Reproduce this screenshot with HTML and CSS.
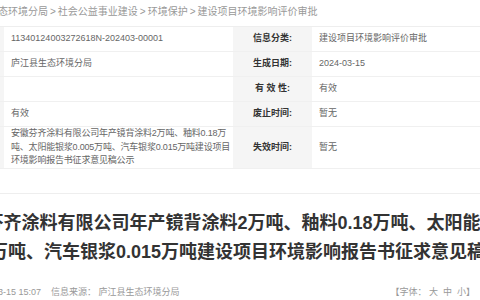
FILE: index.html
```html
<!doctype html>
<html>
<head>
<meta charset="utf-8">
<link rel="stylesheet" href="styles.css">
<title>建设项目环境影响评价审批</title>
</head>
<body>
<div class="page">
  <div class="crumb">
    <span>庐江县生态环境分局</span><span class="sep">&gt;</span><span>社会公益事业建设</span><span class="sep">&gt;</span><span>环境保护</span><span class="sep">&gt;</span><span>建设项目环境影响评价审批</span>
  </div>

  <div class="info-box">
    <table class="info">
      <tr>
        <th>索 引 号:</th>
        <td>11340124003272618N-202403-00001</td>
        <th>信息分类:</th>
        <td>建设项目环境影响评价审批</td>
      </tr>
      <tr>
        <th>发布机构:</th>
        <td>庐江县生态环境分局</td>
        <th>生成日期:</th>
        <td>2024-03-15</td>
      </tr>
      <tr>
        <th>文　　号:</th>
        <td></td>
        <th>有 效 性:</th>
        <td>有效</td>
      </tr>
      <tr>
        <th>有 效 性:</th>
        <td>有效</td>
        <th>废止时间:</th>
        <td>暂无</td>
      </tr>
      <tr class="tall">
        <th>名　　称:</th>
        <td class="name">安徽芬齐涂料有限公司年产镜背涂料2万吨、釉料0.18万吨、太阳能银浆0.005万吨、汽车银浆0.015万吨建设项目环境影响报告书征求意见稿公示</td>
        <th>失效时间:</th>
        <td>暂无</td>
      </tr>
    </table>
  </div>

  <h1 class="title">安徽芬齐涂料有限公司年产镜背涂料2万吨、釉料0.18万吨、太阳能银浆0.005万吨、汽车银浆0.015万吨建设项目环境影响报告书征求意见稿公示</h1>

  <div class="meta">
    <div class="meta-left">
      <span>发布时间：2024-03-15 15:07</span>
      <span>信息来源： 庐江县生态环境分局</span>
    </div>
    <div class="meta-right">【字体：&nbsp;大&nbsp;&nbsp;中&nbsp;&nbsp;小】</div>
  </div>
</div>
</body>
</html>
```

FILE: styles.css
```css
html, body {
    margin: 0;
    padding: 0;
    background: #fff;
    overflow: hidden;
}
body {
    font-family: "Liberation Sans", "Noto Sans CJK SC", sans-serif;
    color: #666;
}
.page {
    width: 616px;
    margin-left: -75px;
}
.crumb {
    font-size: 10px;
    line-height: 14px;
    color: #999;
    padding: 5px 0 0 33px;
    height: 21px;
    white-space: nowrap;
}
.crumb .sep {
    margin: 0 2px;
}
.info-box {
    border-top: 1px solid #eee;
    border-bottom: 1px solid #eee;
    padding-bottom: 24px;
}
.info {
    width: 100%;
    border-collapse: collapse;
    table-layout: fixed;
    font-size: 9px;
}
.info th,
.info td {
    border-bottom: 1px solid #f0f0f0;
    height: 24px;
    line-height: 13.5px;
    vertical-align: middle;
}
.info th {
    width: 63px;
    padding: 0 8px;
    background: #f5f5f5;
    color: #333;
    font-weight: bold;
    text-align: center;
}
.info td {
    width: 222px;
    padding: 0 0 0 7px;
    text-align: left;
}
.info td.name {
    letter-spacing: -0.2px;
}
.info tr.tall th,
.info tr.tall td {
    height: 40px;
}
.title {
    width: 580px;
    margin: 15px auto 0;
    font-size: 18px;
    line-height: 29px;
    font-weight: bold;
    color: #333;
    text-align: center;
}
.meta {
    display: flex;
    justify-content: space-between;
    align-items: center;
    margin-top: 14px;
    padding: 0 66px 0 0;
    height: 22px;
    border-bottom: 1px solid #eee;
    font-size: 9px;
    color: #999;
}
.meta-left {
    display: flex;
    gap: 10px;
}
```
